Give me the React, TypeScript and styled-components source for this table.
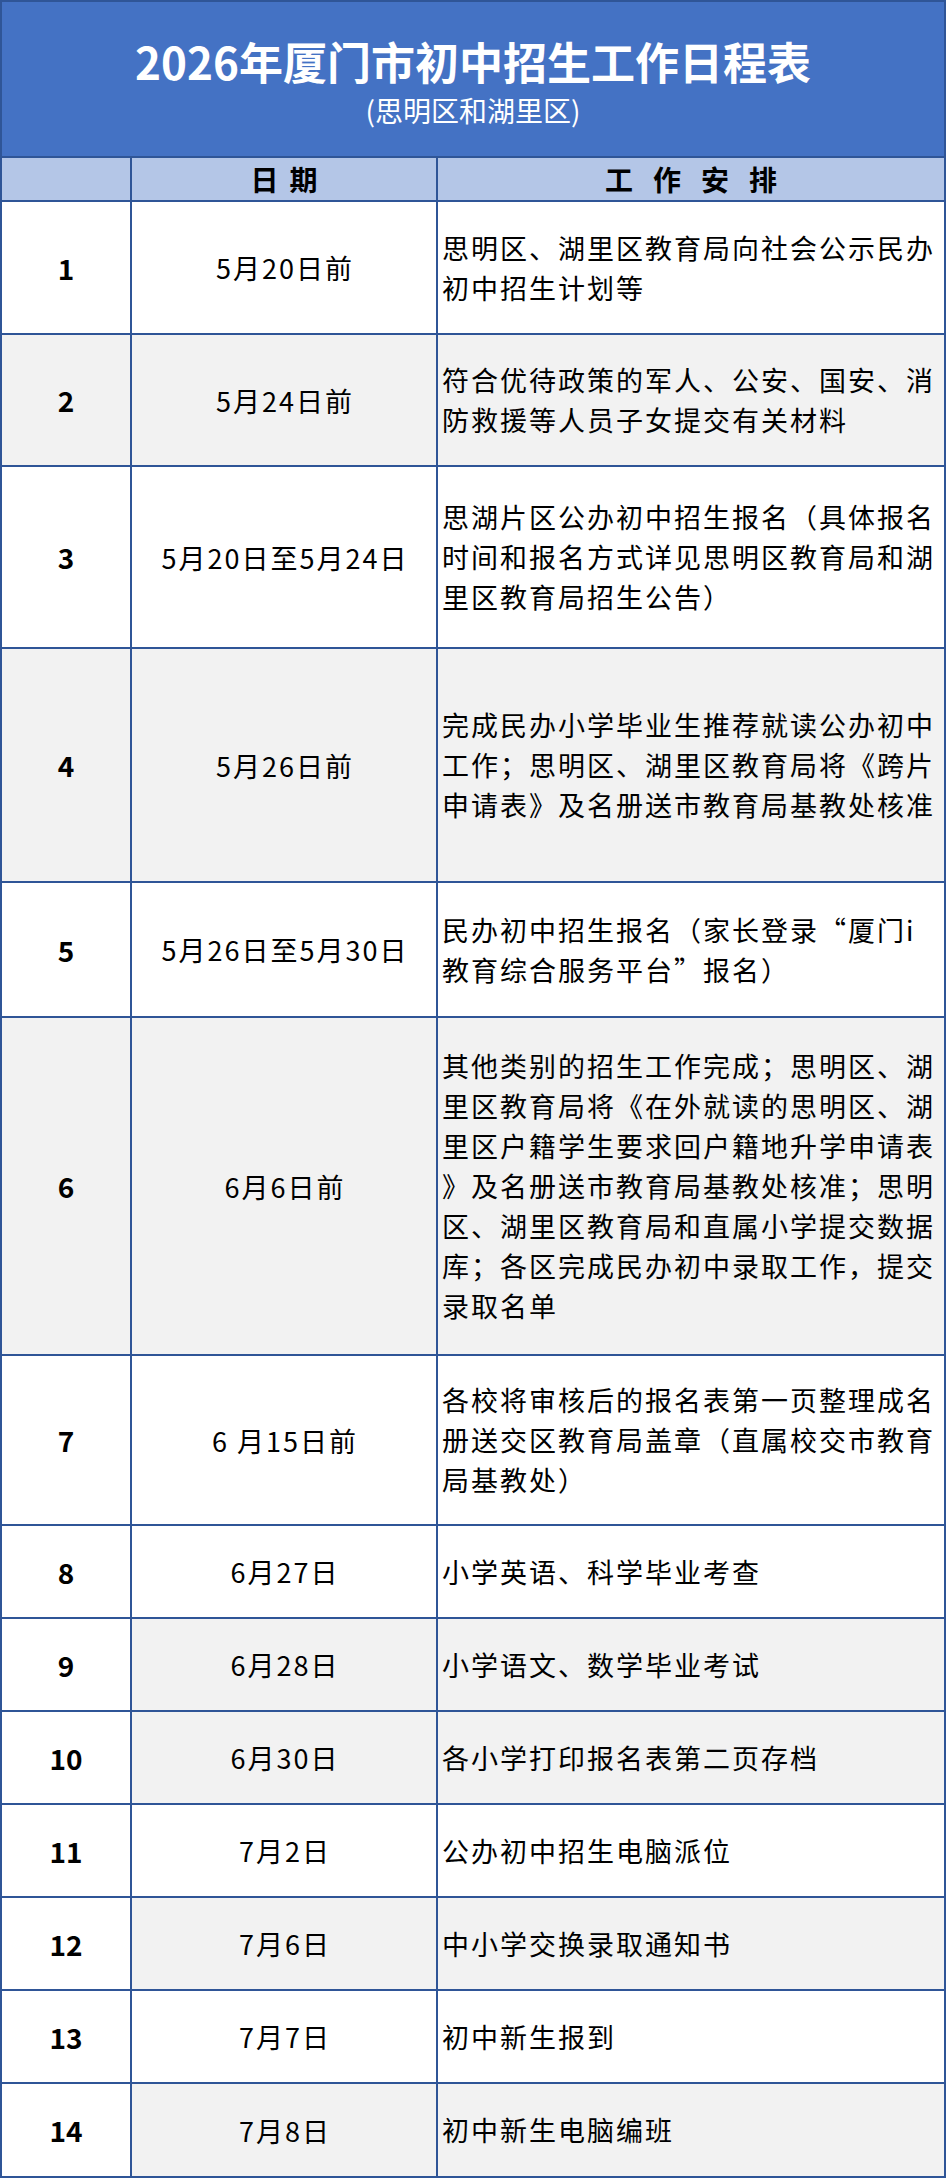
import React from 'react';
import styled, { createGlobalStyle } from 'styled-components';

const GlobalStyle = createGlobalStyle`
  html, body {
    margin: 0;
    padding: 0;
    background: #ffffff;
  }
  body {
    font-family: "Noto Sans CJK SC", "Noto Sans", sans-serif;
    color: #000000;
  }
`;

const BORDER = '#2f5597';

const Table = styled.div`
  box-sizing: border-box;
  width: 946px;
  display: grid;
  grid-template-columns: 128px 304px 506px;
  gap: 2px;
  padding: 2px;
  background: ${BORDER};
`;

const TitleCell = styled.div`
  grid-column: 1 / -1;
  height: 154px;
  box-sizing: border-box;
  padding-top: 34px;
  background: #4472c4;
  color: #ffffff;
  display: flex;
  flex-direction: column;
  align-items: center;
  gap: 6px;
`;

const Title = styled.h1`
  margin: 0;
  font-size: 44px;
  line-height: 50px;
  font-weight: 700;
`;

const Subtitle = styled.div`
  font-size: 28px;
  line-height: 36px;
  font-weight: 400;
`;

const HeadCell = styled.div`
  height: 42px;
  background: #b4c6e7;
  display: flex;
  align-items: center;
  justify-content: center;
`;

const HeadLabel = styled.span<{ $spacing: number }>`
  font-size: 28px;
  font-weight: 700;
  line-height: 42px;
  letter-spacing: ${p => p.$spacing}px;
  text-indent: ${p => p.$spacing}px;
`;

const Cell = styled.div<{ $h: number; $shade: boolean }>`
  height: ${p => p.$h}px;
  background: ${p => (p.$shade ? '#f2f2f2' : '#ffffff')};
  display: flex;
  align-items: center;
  overflow: hidden;
`;

const NumCell = styled(Cell)`
  justify-content: center;
  font-size: 28px;
  font-weight: 700;
`;

const DateCell = styled(Cell)`
  justify-content: center;
  font-size: 27px;
  letter-spacing: 2px;
  padding-left: 2px;
`;

const TaskCell = styled(Cell)`
  padding-left: 4px;
`;

const Lines = styled.div`
  display: flex;
  flex-direction: column;
`;

const Line = styled.span`
  font-size: 27px;
  line-height: 40px;
  letter-spacing: 2px;
  white-space: nowrap;
`;

type Entry = {
  date: string;
  task: string[];
  h: number;
  shade: boolean;
  numShade: boolean;
};

const entries: Entry[] = [
  { date: '5月20日前', h: 131, shade: false, numShade: false,
    task: ['思明区、湖里区教育局向社会公示民办', '初中招生计划等'] },
  { date: '5月24日前', h: 130, shade: true, numShade: true,
    task: ['符合优待政策的军人、公安、国安、消', '防救援等人员子女提交有关材料'] },
  { date: '5月20日至5月24日', h: 180, shade: false, numShade: false,
    task: ['思湖片区公办初中招生报名（具体报名', '时间和报名方式详见思明区教育局和湖', '里区教育局招生公告）'] },
  { date: '5月26日前', h: 232, shade: true, numShade: true,
    task: ['完成民办小学毕业生推荐就读公办初中', '工作；思明区、湖里区教育局将《跨片', '申请表》及名册送市教育局基教处核准'] },
  { date: '5月26日至5月30日', h: 133, shade: false, numShade: false,
    task: ['民办初中招生报名（家长登录“厦门i', '教育综合服务平台”报名）'] },
  { date: '6月6日前', h: 336, shade: true, numShade: true,
    task: [
      '其他类别的招生工作完成；思明区、湖',
      '里区教育局将《在外就读的思明区、湖',
      '里区户籍学生要求回户籍地升学申请表',
      '》及名册送市教育局基教处核准；思明',
      '区、湖里区教育局和直属小学提交数据',
      '库；各区完成民办初中录取工作，提交',
      '录取名单',
    ] },
  { date: '6 月15日前', h: 168, shade: false, numShade: false,
    task: ['各校将审核后的报名表第一页整理成名', '册送交区教育局盖章（直属校交市教育', '局基教处）'] },
  { date: '6月27日', h: 91, shade: false, numShade: false, task: ['小学英语、科学毕业考查'] },
  { date: '6月28日', h: 91, shade: true, numShade: false, task: ['小学语文、数学毕业考试'] },
  { date: '6月30日', h: 91, shade: true, numShade: false, task: ['各小学打印报名表第二页存档'] },
  { date: '7月2日', h: 91, shade: false, numShade: false, task: ['公办初中招生电脑派位'] },
  { date: '7月6日', h: 91, shade: true, numShade: false, task: ['中小学交换录取通知书'] },
  { date: '7月7日', h: 91, shade: false, numShade: false, task: ['初中新生报到'] },
  { date: '7月8日', h: 92, shade: true, numShade: false, task: ['初中新生电脑编班'] },
];

export default function App() {
  return (
    <>
      <GlobalStyle />
      <Table>
        <TitleCell>
          <Title>2026年厦门市初中招生工作日程表</Title>
          <Subtitle>(思明区和湖里区)</Subtitle>
        </TitleCell>

        <HeadCell />
        <HeadCell>
          <HeadLabel $spacing={11}>日期</HeadLabel>
        </HeadCell>
        <HeadCell>
          <HeadLabel $spacing={20}>工作安排</HeadLabel>
        </HeadCell>

        {entries.map((e, i) => (
          <React.Fragment key={i}>
            <NumCell $h={e.h} $shade={e.numShade}>{i + 1}</NumCell>
            <DateCell $h={e.h} $shade={e.shade}>{e.date}</DateCell>
            <TaskCell $h={e.h} $shade={e.shade}>
              <Lines>
                {e.task.map(line => <Line key={line}>{line}</Line>)}
              </Lines>
            </TaskCell>
          </React.Fragment>
        ))}
      </Table>
    </>
  );
}
